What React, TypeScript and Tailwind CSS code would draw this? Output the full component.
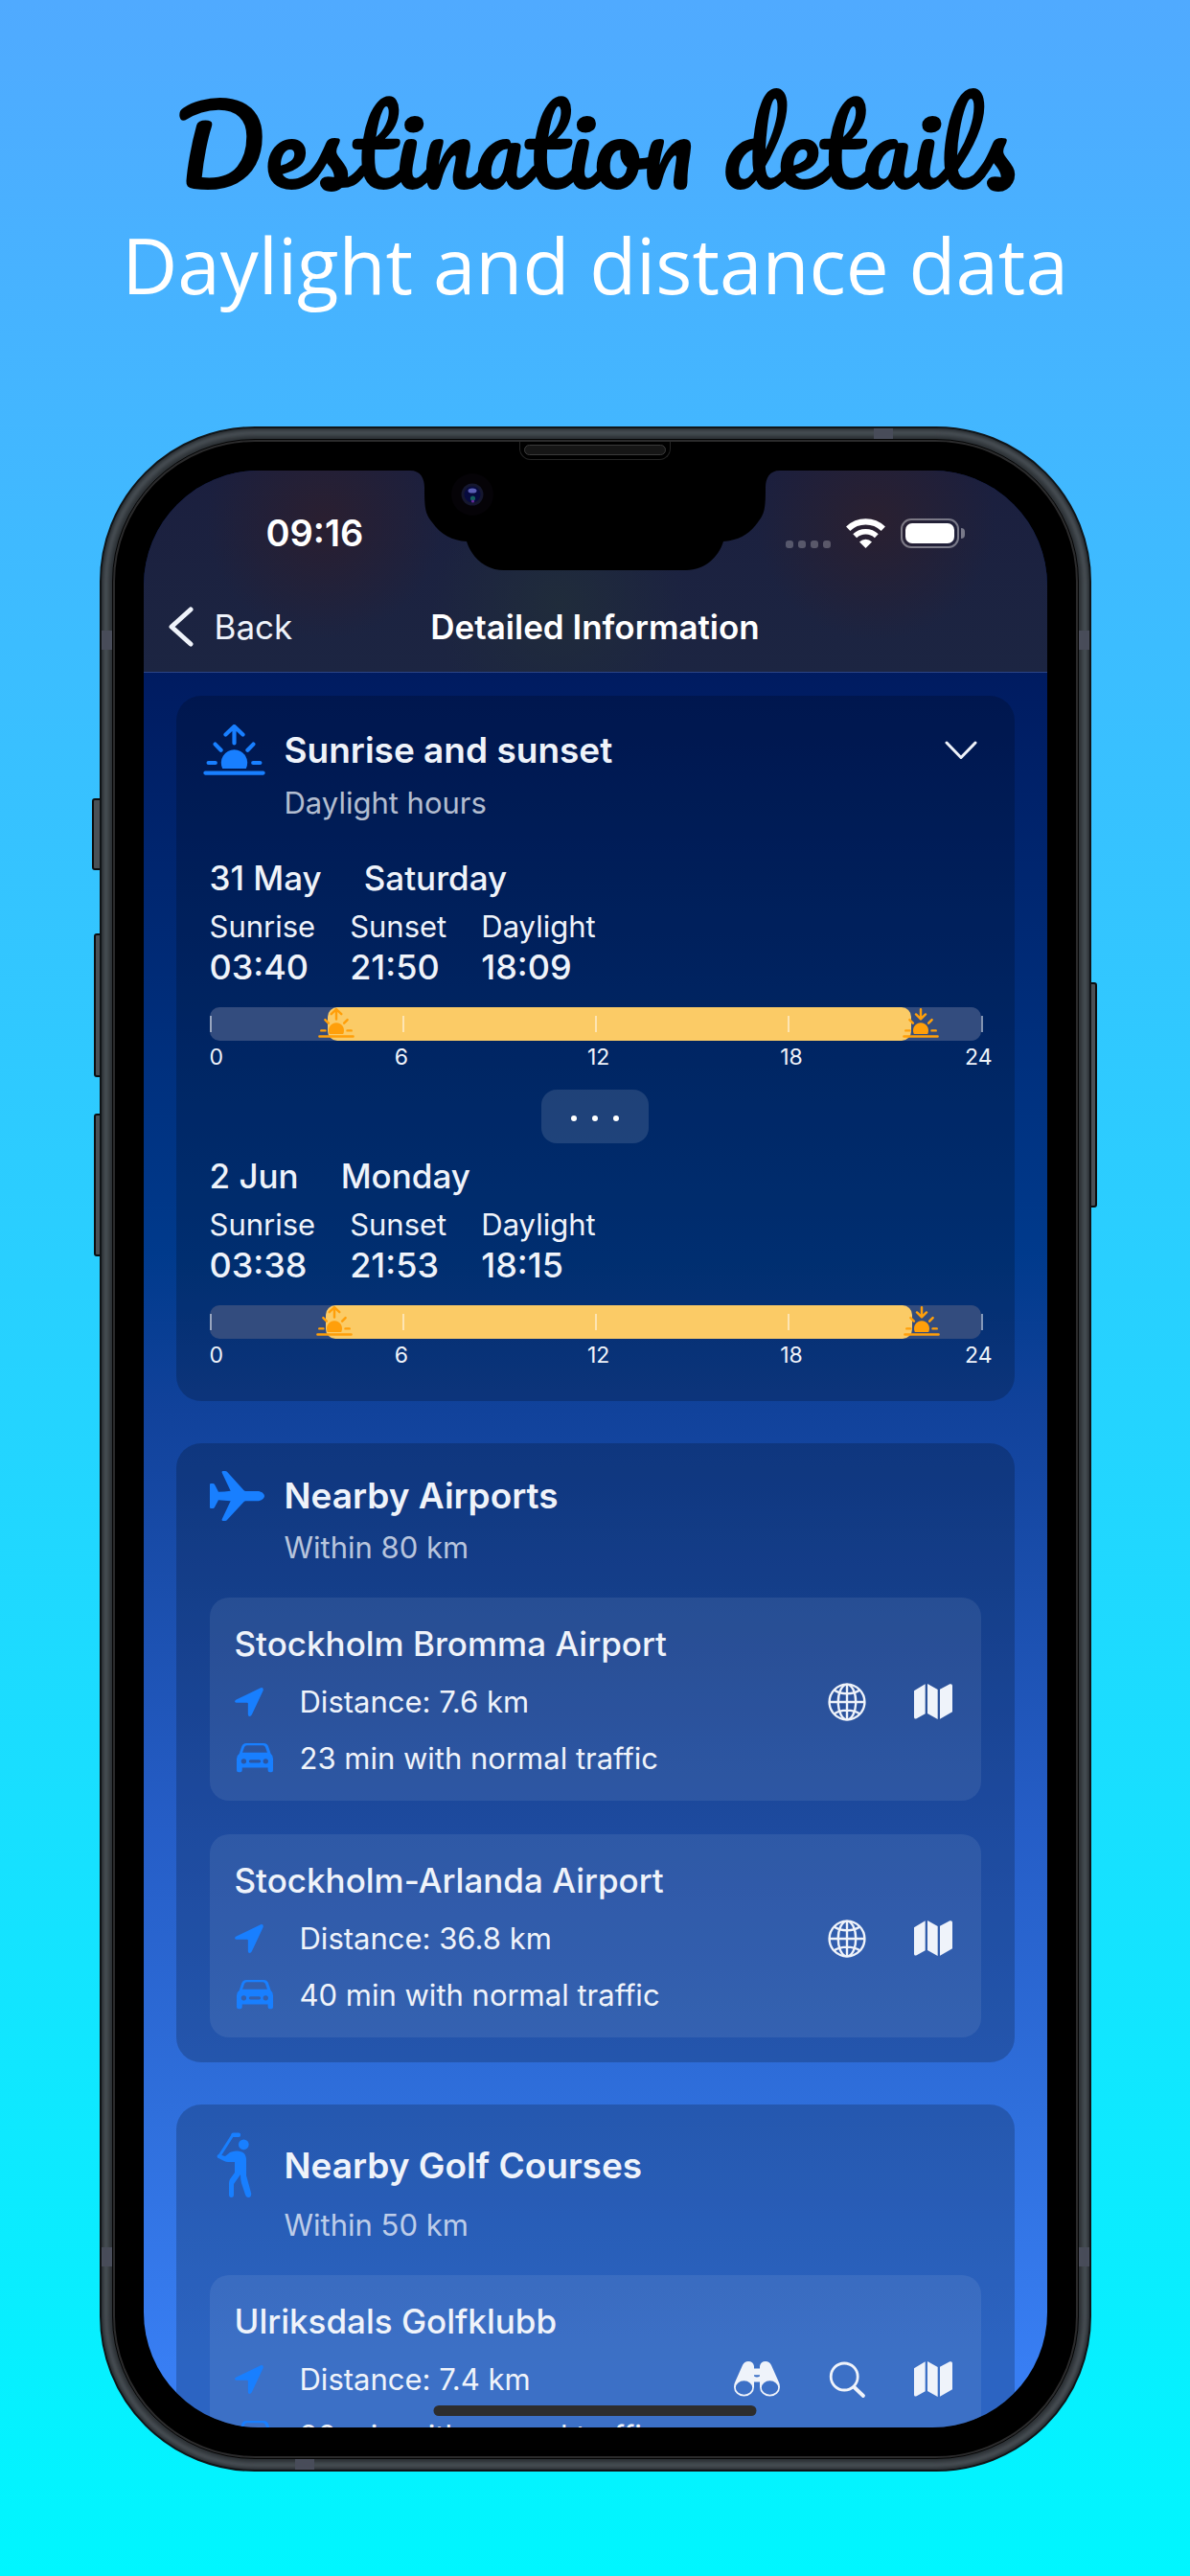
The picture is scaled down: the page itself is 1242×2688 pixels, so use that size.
import React from "react";

type IconProps = { className?: string };

function SunIcon({ className, down }: IconProps & { down?: boolean }) {
  return (
    <svg viewBox="0 0 65 54" className={className} aria-hidden="true" fill="none" stroke="currentColor" strokeWidth="4.2" strokeLinecap="round" strokeLinejoin="round">
      <path d={down ? "M32.5 2v17M24 11l8.5 8.5L41 11" : "M32.5 2.5v17M23.5 10.5l9-8.5 9 8.5"} />
      <path d="M12.6 20.6l6 6.2M52.4 20.6l-6 6.2M5.6 40h7.2M52.2 40h7.2M2.4 50.6h60.2" />
      <path d="M20.2 46a13.7 13.7 0 1 1 24.6 0z" fill="currentColor" stroke="none" />
    </svg>
  );
}

function PlaneIcon({ className }: IconProps) {
  return (
    <svg viewBox="0 0 171 156" className={className} aria-hidden="true" fill="currentColor">
      <path d="M3 39H10Q13 39 15 42L27 65Q45 65 65 62L38 5Q37 0 41 0H48Q52 0 54 2L107 61Q109 63 112 63H148C162 63 171 71 171 78C171 85 162 94 148 94H112Q109 94 107 96L54 153Q52 156 48 156H41Q37 156 38 151L65 94Q45 93 27 91L15 113Q13 117 10 117H3Q0 117 0 113V43Q0 39 3 39Z" />
    </svg>
  );
}

function GolferIcon({ className }: IconProps) {
  return (
    <svg viewBox="0 0 37 69" className={className} aria-hidden="true" fill="currentColor">
      <path d="M2.5 25.5L17 2.8h6" fill="none" stroke="currentColor" strokeWidth="3" strokeLinecap="round" strokeLinejoin="round" />
      <path d="M17.5 2.8h5.5" fill="none" stroke="currentColor" strokeWidth="4.4" strokeLinecap="round" />
      <circle cx="28.3" cy="12.8" r="5.4" />
      <path d="M2 23L9 25L14 21Q18 19 22 19.5Q31 20 31 29V45L36 63Q37 67 34 68Q31 68.5 30 65L26 53Q25 50 25 44L18 54V65Q18 68 15.5 68Q13 68 13 65V53Q13 51 14 49L19 42V31H12Q10 31 8 30L2 27Q-1 25 2 23Z" />
    </svg>
  );
}

function ArrowIcon({ className }: IconProps) {
  return (
    <svg viewBox="0 0 91 91" className={className} aria-hidden="true" fill="currentColor">
      <path d="M5 38L82 1Q92 -2 90 9L54 86Q51 91 47 91Q42 91 42 85V50Q42 48 39 48H5Q0 47 0 43Q0 41 5 38Z" />
    </svg>
  );
}

function CarIcon({ className }: IconProps) {
  return (
    <svg viewBox="0 0 113 90" className={className} aria-hidden="true" fill="currentColor" fillRule="evenodd">
      <path d="M30 0H84Q94 0 98 9L106 33Q113 38 113 48V84Q113 90 108 90H103Q97 90 97 84V76H17V84Q17 90 11 90H6Q0 90 0 84V48Q0 38 8 33L16 9Q20 0 30 0ZM32 7Q26 7 24 12L18 29H95L89 12Q87 7 81 7ZM14 56a8 8 0 1 0 16 0a8 8 0 1 0 -16 0M82 56a8 8 0 1 0 16 0a8 8 0 1 0 -16 0M43 51H70a5 5 0 0 1 0 10H43a5 5 0 0 1 0 -10Z" />
    </svg>
  );
}

function GlobeIcon({ className }: IconProps) {
  return (
    <svg viewBox="0 0 40 40" className={className} aria-hidden="true" fill="none" stroke="currentColor" strokeWidth="2.4">
      <circle cx="20" cy="20" r="18.4" />
      <ellipse cx="20" cy="20" rx="9.2" ry="18.4" />
      <path d="M20 1.6v36.8M1.6 20h36.8M6.5 7.6Q12 11.4 20 11.4T33.5 7.6M6.5 32.4Q12 28.6 20 28.6T33.5 32.4" />
    </svg>
  );
}

function MapIcon({ className }: IconProps) {
  return (
    <svg viewBox="0 0 120 111" className={className} aria-hidden="true" fill="currentColor">
      <path d="M0 22L35 1V94L8 109Q0 112 0 104ZM42 0L74 18V111L42 93ZM81 17L112 1Q120 -1 120 6V88L81 110Z" />
    </svg>
  );
}

function BinocularsIcon({ className }: IconProps) {
  return (
    <svg viewBox="0 0 48 37" className={className} aria-hidden="true" fill="currentColor" fillRule="evenodd">
      <path d="M21 27V5Q20 0 15 0Q11 0 9 4L1 22Q0 24 0 27A10.5 9.6 0 0 0 21 27ZM1.8 27.5a8.7 7.2 0 1 0 17.4 0a8.7 7.2 0 1 0 -17.4 0" />
      <path d="M27 27V5Q28 0 33 0Q37 0 39 4L47 22Q48 24 48 27A10.5 9.6 0 0 1 27 27ZM28.8 27.5a8.7 7.2 0 1 0 17.4 0a8.7 7.2 0 1 0 -17.4 0" />
      <path d="M20 7.5H28V21.5H20ZM21 14.2V15.6Q24 17.4 27 15.6V14.2Z" />
    </svg>
  );
}

function SearchIcon({ className }: IconProps) {
  return (
    <svg viewBox="0 0 40 40" className={className} aria-hidden="true" fill="none" stroke="currentColor" strokeLinecap="round">
      <circle cx="17.2" cy="17" r="14" strokeWidth="2.8" />
      <path d="M27.5 28L37 37" strokeWidth="3.8" />
    </svg>
  );
}

function WifiIcon({ className }: IconProps) {
  return (
    <svg viewBox="0 0 41 31" className={className} aria-hidden="true" fill="none" stroke="currentColor" strokeWidth="6.2">
      <path d="M2.2 10.8A26.5 26.5 0 0 1 38.8 10.8" />
      <path d="M9.2 18.2A16.4 16.4 0 0 1 31.8 18.2" strokeWidth="5.6" />
      <path d="M14 24.4A9.5 9.5 0 0 1 27 24.4L20.5 31Z" fill="currentColor" stroke="none" />
    </svg>
  );
}

function NotchShape({ className }: IconProps) {
  return (
    <svg viewBox="0 0 386 104" className={className} aria-hidden="true">
      <path d="M0 0C11 0 15 8 15 18C15 40 16 45 23 54C32 67 44 73 59 74C64 90 78 104 98 104H288C308 104 322 90 327 74C342 73 354 67 363 54C370 45 371 40 371 18C371 8 375 0 386 0Z" fill="#000" />
      <circle cx="65" cy="25" r="22" fill="#050307" />
      <circle cx="65" cy="25" r="11.5" fill="#15172f" />
      <circle cx="65" cy="25" r="8.5" fill="#070a3e" />
      <ellipse cx="65" cy="21" rx="4.5" ry="2.6" fill="#5a5fb5" />
      <circle cx="65.5" cy="29" r="2.6" fill="#12605f" />
      <circle cx="65.5" cy="32" r="1.6" fill="#6a2a9a" />
    </svg>
  );
}

const HOURS = 24;

function DaylightBar({ rise, set }: { rise: number; set: number }) {
  const start = (rise / HOURS) * 100;
  const end = (set / HOURS) * 100;
  return (
    <div>
      <div className="relative h-[35px] rounded-[10px] bg-[#334c7e]">
        <div className="absolute inset-y-0 rounded-[10px] bg-[#fbcb66]" style={{ left: `${start}%`, right: `${100 - end}%` }} />
        {[0, 25, 50, 75, 100].map((p) => (
          <span key={p} className="absolute top-[9px] h-[17px] w-[2px] bg-white/50" style={{ left: `${p}%` }} />
        ))}
        <span className="absolute top-px" style={{ left: `${start}%` }}>
          <SunIcon className="-ml-[10px] w-[38px] text-[#ff9f0a]" />
        </span>
        <span className="absolute top-px" style={{ left: `${end}%` }}>
          <SunIcon down className="-ml-[9px] w-[38px] text-[#ff9f0a]" />
        </span>
      </div>
      <div className="mt-[4px] grid grid-cols-4 text-[23px] leading-[26px]">
        <span>0</span>
        <span className="-ml-2">6</span>
        <span className="-ml-2">12</span>
        <span className="-mr-3 -ml-2 flex justify-between">
          <span>18</span>
          <span>24</span>
        </span>
      </div>
    </div>
  );
}

type Day = { date: string; weekday: string; sunrise: string; sunset: string; daylight: string; rise: number; set: number };

function DayBlock({ day }: { day: Day }) {
  const stats = [
    ["Sunrise", day.sunrise],
    ["Sunset", day.sunset],
    ["Daylight", day.daylight],
  ];
  return (
    <div>
      <div className="flex gap-11 text-[35px] leading-[44px] font-medium">
        <span>{day.date}</span>
        <span>{day.weekday}</span>
      </div>
      <dl className="mt-2 flex gap-9">
        {stats.map(([label, value]) => (
          <div key={label}>
            <dt className="text-[31px] leading-[42px]">{label}</dt>
            <dd className="text-[36px] leading-[42px] font-medium">{value}</dd>
          </div>
        ))}
      </dl>
      <div className="mt-[21px]">
        <DaylightBar rise={day.rise} set={day.set} />
      </div>
    </div>
  );
}

function Card({ children, className }: { children: React.ReactNode; className?: string }) {
  return <section className={`rounded-[26px] bg-black/20 px-[35px] ${className ?? ""}`}>{children}</section>;
}

function CardHead({ icon, title, sub, action }: { icon: React.ReactNode; title: string; sub: string; action?: React.ReactNode }) {
  return (
    <header className="grid grid-cols-[78px_1fr_auto] items-center text-[#187fff]">
      {icon}
      <h2 className="text-[37px] leading-[44px] font-semibold text-[#eff3fa]">{title}</h2>
      {action ?? <span />}
      <span />
      <p className="mt-2 text-[31px] leading-[40px] text-[#eff3fa]/75">{sub}</p>
    </header>
  );
}

type Action = { label: string; icon: React.ReactNode };

function Place({ name, distance, drive, actions }: { name: string; distance: string; drive: string; actions: Action[] }) {
  return (
    <article className="rounded-[20px] bg-white/8 pt-[25px] pr-[30px] pb-[15px] pl-[26px]">
      <h3 className="text-[35px] leading-[46px] font-medium">{name}</h3>
      <div className="mt-[8px] flex items-center justify-between">
        <p className="flex items-center text-[31px] leading-[59px]">
          <span className="w-[68px] text-[#187fff]">
            <ArrowIcon className="w-[30px]" />
          </span>
          {distance}
        </p>
        <div className="flex items-center gap-[50px]">
          {actions.map((a) => (
            <button key={a.label} type="button" aria-label={a.label}>
              {a.icon}
            </button>
          ))}
        </div>
      </div>
      <p className="flex items-center text-[31px] leading-[59px]">
        <span className="w-[68px] pl-[2px] text-[#187fff]">
          <CarIcon className="w-[38px]" />
        </span>
        {drive}
      </p>
    </article>
  );
}

const DAYS: Day[] = [
  { date: "31 May", weekday: "Saturday", sunrise: "03:40", sunset: "21:50", daylight: "18:09", rise: 3.67, set: 21.83 },
  { date: "2 Jun", weekday: "Monday", sunrise: "03:38", sunset: "21:53", daylight: "18:15", rise: 3.63, set: 21.88 },
];

const WEB: Action = { label: "Website", icon: <GlobeIcon className="w-10" /> };
const MAP: Action = { label: "Show on map", icon: <MapIcon className="w-10" /> };
const SPOT: Action = { label: "Look around", icon: <BinocularsIcon className="w-12" /> };
const FIND: Action = { label: "Search", icon: <SearchIcon className="w-10" /> };

function StatusBar() {
  return (
    <div className="flex items-center justify-between pt-[39px] pr-[86px] pl-[128px]">
      <span className="text-[38px] leading-[52px] font-semibold text-white">09:16</span>
      <div className="flex items-end text-white">
        <div className="mr-4 flex gap-[5px]">
          {[0, 1, 2, 3].map((i) => (
            <span key={i} className="size-2 rounded-[3px] bg-white/25" />
          ))}
        </div>
        <WifiIcon className="mr-4 w-[41px]" />
        <span className="h-[31px] w-[61px] rounded-[11px] border-2 border-white/40 p-[3px]">
          <span className="block h-full rounded-[7px] bg-white" />
        </span>
        <span className="mb-[10px] ml-[2px] h-[11px] w-1 rounded-r-full bg-white/40" />
      </div>
    </div>
  );
}

function Phone() {
  const band = "absolute bg-[#484c59]";
  const key = "absolute -z-10 w-4 rounded-[3px] border-2 border-[#0b0d0f] bg-[#4a5056]";
  return (
    <div className="relative isolate mx-auto aspect-[1035/2134] w-5/6">
      <span className={`${key} top-[18.2%] -left-2 h-[3.5%]`} />
      <span className={`${key} top-[24.8%] -left-[6px] h-[7%]`} />
      <span className={`${key} top-[33.6%] -left-[6px] h-[7%]`} />
      <span className={`${key} top-[27.2%] -right-[6px] h-[11%]`} />
      <div className="relative h-full overflow-hidden rounded-[162px] border-2 border-[#101417] bg-[#2a2f33] p-[12px] shadow-[inset_0_0_4px_2px_#23282c,inset_0_0_5px_7px_#50575d]">
        <span className={`${band} top-0 left-[78.2%] h-4 w-5`} />
        <span className={`${band} bottom-0 left-[19.6%] h-4 w-5`} />
        <span className={`${band} top-[9.9%] left-0 h-5 w-4`} />
        <span className={`${band} top-[9.9%] right-0 h-5 w-4`} />
        <span className={`${band} top-[89.1%] left-0 h-5 w-4`} />
        <span className={`${band} top-[89.1%] right-0 h-5 w-4`} />
        <div className="relative h-full rounded-[148px] border-2 border-[#2b2b2c] bg-black p-[30px] outline outline-[#050505]">
          <div className="absolute top-0 left-1/2 h-[19px] w-[158px] -translate-x-1/2 rounded-b-[12px] border border-t-0 border-[#242424] px-1 pt-[3px]">
            <div className="h-[11px] rounded-full border border-[#3a3a3a] bg-[#161616]" />
          </div>
          <Screen />
        </div>
      </div>
    </div>
  );
}

function Screen() {
  return (
    <div className="relative flex h-full flex-col overflow-hidden rounded-[120px] bg-[linear-gradient(to_bottom,#001454_0%,#001b60_10%,#003a8c_40%,#11429b_48%,#1a4eac_57%,#255dc6_69%,#2f6fdc_84%,#387ef3_97%)] font-['Inter','Liberation_Sans',sans-serif] text-[#eff3fa]">
      <NotchShape className="absolute top-0 left-1/2 w-[386px] -translate-x-1/2" />
      <div className="shrink-0 border-b border-[#2b4486] bg-[radial-gradient(circle_at_20%_25%,#2a1f30_0%,transparent_16%),radial-gradient(circle_at_81%_25%,#2a2030_0%,transparent_16%),radial-gradient(circle_at_46%_66%,#202c3b_0%,transparent_25%),linear-gradient(to_bottom,#1b1f3e,#1c2542)]">
        <StatusBar />
        <nav className="mt-[42px] grid grid-cols-[1fr_auto_1fr] items-center px-[26px] pb-[17px]">
          <button type="button" className="flex items-center gap-[22px] text-[35px] leading-[60px]">
            <svg viewBox="0 0 26 42" className="w-[26px]" aria-hidden="true" fill="none" stroke="currentColor" strokeWidth="5" strokeLinecap="round" strokeLinejoin="round">
              <path d="M23 3L3 21l20 18" />
            </svg>
            Back
          </button>
          <h1 className="text-[35px] leading-[60px] font-semibold text-white">Detailed Information</h1>
          <span />
        </nav>
      </div>
      <main className="flex flex-col gap-[44px] px-[34px] pt-[24px]">
        <Card className="pt-[30px] pb-[35px]">
          <CardHead
            icon={<SunIcon className="-ml-[7px] w-[65px]" />}
            title="Sunrise and sunset"
            sub="Daylight hours"
            action={
              <button type="button" aria-label="Collapse" className="pr-1 text-[#eff3fa]">
                <svg viewBox="0 0 34 20" className="w-[34px]" aria-hidden="true" fill="none" stroke="currentColor" strokeWidth="3" strokeLinecap="round" strokeLinejoin="round">
                  <path d="M2 2l15 15.500L32 2" />
                </svg>
              </button>
            }
          />
          <div className="mt-[36px]">
            <DayBlock day={DAYS[0]} />
          </div>
          <div className="mt-[21px] mb-[12px] flex justify-center">
            <button type="button" aria-label="Show more days" className="flex h-14 w-28 items-center justify-center gap-4 rounded-[16px] bg-white/12 pt-1">
              <span className="size-[6px] rounded-full bg-white" />
              <span className="size-[6px] rounded-full bg-white" />
              <span className="size-[6px] rounded-full bg-white" />
            </button>
          </div>
          <DayBlock day={DAYS[1]} />
        </Card>
        <Card className="pt-[29px] pb-[26px]">
          <CardHead icon={<PlaneIcon className="w-[57px]" />} title="Nearby Airports" sub="Within 80 km" />
          <div className="mt-[32px] flex flex-col gap-[35px]">
            <Place name="Stockholm Bromma Airport" distance="Distance: 7.6 km" drive="23 min with normal traffic" actions={[WEB, MAP]} />
            <Place name="Stockholm-Arlanda Airport" distance="Distance: 36.8 km" drive="40 min with normal traffic" actions={[WEB, MAP]} />
          </div>
        </Card>
        <Card className="pt-[29px] pb-[26px]">
          <CardHead icon={<GolferIcon className="ml-[7px] w-[37px]" />} title="Nearby Golf Courses" sub="Within 50 km" />
          <div className="mt-[32px]">
            <Place name="Ulriksdals Golfklubb" distance="Distance: 7.4 km" drive="20 min with normal traffic" actions={[SPOT, FIND, MAP]} />
          </div>
        </Card>
      </main>
      <div className="absolute bottom-[12px] left-1/2 h-[11px] w-[337px] -translate-x-1/2 rounded-full bg-[#2d2d2d]" />
    </div>
  );
}

export default function App() {
  return (
    <div className="min-h-screen overflow-hidden bg-[linear-gradient(to_bottom,#50aaff,#00f6ff)] pb-[109px]">
      <header className="pt-[78px] text-center">
        <p className="font-['Pacifico',cursive] text-[112px] leading-[144px] text-black">Destination details</p>
        <p className="font-['Open_Sans',sans-serif] text-[80px] leading-[108px] text-white">Daylight and distance data</p>
      </header>
      <div className="mt-[115px]">
        <Phone />
      </div>
    </div>
  );
}
